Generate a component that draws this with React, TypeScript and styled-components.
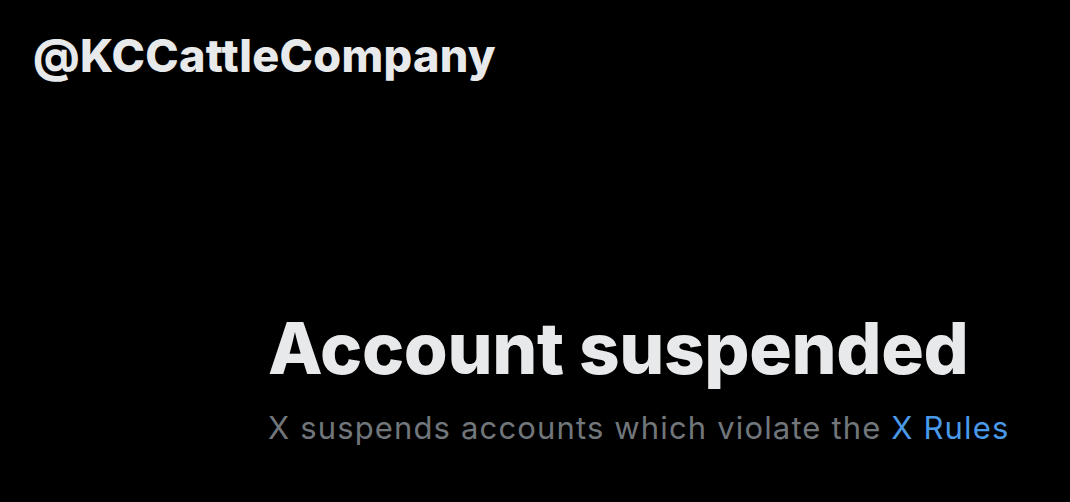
import React from "react";
import styled, { createGlobalStyle } from "styled-components";

const GlobalStyle = createGlobalStyle`
    html, body {
        margin: 0;
        padding: 0;
        background: #000;
    }
    body {
        font-family: Inter, "Liberation Sans", sans-serif;
        -webkit-font-smoothing: antialiased;
    }
`;

const Page = styled.div`
    width: 1070px;
    height: 502px;
    background: #000;
    display: flex;
    flex-direction: column;
    box-sizing: border-box;
    padding: 28px 0 0 33px;
`;

const Handle = styled.div`
    color: #e7e9ea;
    font-size: 45px;
    font-weight: 800;
    line-height: 56px;
    letter-spacing: 0.3px;
`;

const Notice = styled.div`
    display: flex;
    flex-direction: column;
    margin: 224px 0 0 235px;
`;

const Title = styled.h1`
    margin: 0;
    color: #e7e9ea;
    font-size: 71px;
    font-weight: 800;
    line-height: 80px;
    letter-spacing: -0.35px;
`;

const Subtitle = styled.p`
    margin: 20px 0 0;
    color: #71767b;
    font-size: 31px;
    font-weight: 400;
    line-height: 40px;
    letter-spacing: 1.15px;
`;

const RulesLink = styled.a`
    color: #4a99e9;
    text-decoration: none;
`;

export default function App() {
    return (
        <>
            <GlobalStyle />
            <Page>
                <Handle>@KCCattleCompany</Handle>
                <Notice>
                    <Title>Account suspended</Title>
                    <Subtitle>
                        X suspends accounts which violate the <RulesLink href="#">X Rules</RulesLink>
                    </Subtitle>
                </Notice>
            </Page>
        </>
    );
}
